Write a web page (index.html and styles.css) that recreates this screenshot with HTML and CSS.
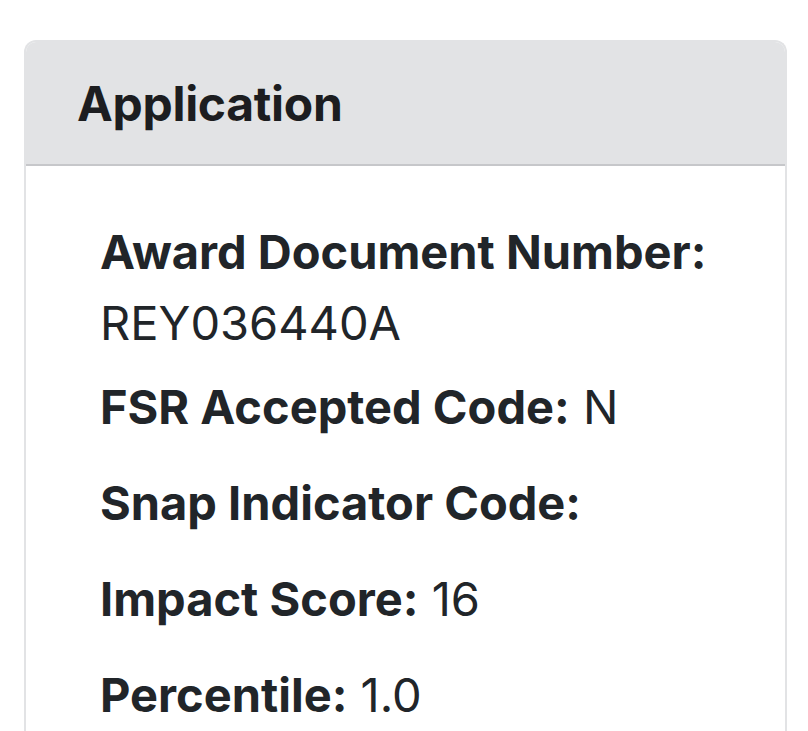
FILE: index.html
```html
<!DOCTYPE html>
<html lang="en">
	<head>
		<meta charset="UTF-8" />
		<meta name="viewport" content="width=device-width, initial-scale=1.0" />
		<title>Application</title>
		<link rel="stylesheet" href="styles.css">
	</head>
	<body>
		<div class="card">
			<div class="card-header">Application</div>
			<div class="card-body">
				<p class="field field-wrap"><strong>Award Document Number:</strong> REY036440A</p>
				<p class="field"><strong>FSR Accepted Code:</strong> N</p>
				<p class="field"><strong>Snap Indicator Code:</strong> </p>
				<p class="field"><strong>Impact Score:</strong> 16</p>
				<p class="field"><strong>Percentile:</strong> 1.0</p>
			</div>
		</div>
	</body>
</html>
```

FILE: styles.css
```css
* {
	box-sizing: border-box;
}
body {
	margin: 0;
	padding: 40px 21px 0 24px;
	background: #fff;
	font-family: Inter, "Noto Sans", sans-serif;
	color: #212529;
}
.card {
	border: 2px solid #e2e3e5;
	border-bottom: none;
	border-radius: 12px 12px 0 0;
	height: 700px;
	overflow: hidden;
}
.card-header {
	background: #e2e3e5;
	border-bottom: 2px solid #c6c7ca;
	height: 124px;
	padding: 27px 0 0 51px;
	font-size: 48px;
	font-weight: 700;
	letter-spacing: -0.3px;
	line-height: 70px;
	color: #1c1d20;
}
.card-body {
	padding: 50px 0 0 74px;
}
.field {
	margin: 0 0 25px;
	font-size: 47px;
	line-height: 71px;
	font-weight: 400;
}
.field strong {
	font-weight: 700;
}
.field-wrap {
	margin-bottom: 13px;
	max-width: 640px;
}
```
